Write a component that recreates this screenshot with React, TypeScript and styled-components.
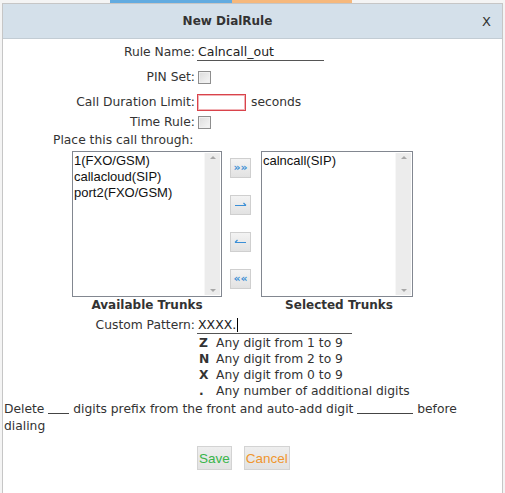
import React from 'react';
import styled, { createGlobalStyle } from 'styled-components';

const GlobalStyle = createGlobalStyle`
  html, body {
    margin: 0;
    padding: 0;
    background: #ffffff;
  }
  body {
    font-family: "DejaVu Sans", Verdana, sans-serif;
    font-size: 12.3px;
    color: #333333;
  }
`;

const Page = styled.div`
  width: 505px;
  height: 493px;
  overflow: hidden;
  position: relative;
  background: #f4f4f4;
`;

const TabStrip = styled.div`
  display: flex;
  height: 3px;
  padding-left: 110px;
  background: #f4f4f4;
`;

const TabBar = styled.div<{ $color: string; $w: number }>`
  width: ${(p) => p.$w}px;
  background: ${(p) => p.$color};
`;

const Dialog = styled.div`
  margin: 0 2px;
  border: 1px solid #c6c6c6;
  border-bottom: none;
  background: #ffffff;
  height: 490px;
`;

const Header = styled.div`
  height: 34px;
  background: #d4e0ea;
  border-bottom: 1px solid #c2ccd4;
  display: flex;
  align-items: center;
  justify-content: center;
  position: relative;
`;

const Title = styled.div`
  font-weight: bold;
  font-size: 12px;
  color: #333;
  margin-left: -50px;
`;

const Close = styled.div`
  position: absolute;
  right: 11px;
  top: 10px;
  font-size: 13px;
  color: #333;
`;

const Body = styled.div`
  padding-top: 4px;
  display: flex;
  flex-direction: column;
`;

const Row = styled.div<{ $h: number; $mt?: number }>`
  display: flex;
  align-items: center;
  height: ${(p) => p.$h}px;
  margin-top: ${(p) => p.$mt ?? 0}px;
`;

const Label = styled.div`
  width: 192px;
  text-align: right;
  padding-right: 2px;
  white-space: nowrap;
`;

const LineInput = styled.div<{ $w: number }>`
  width: ${(p) => p.$w}px;
  height: 17px;
  border-bottom: 1px solid #555;
  font-size: 12.5px;
  line-height: 17px;
  padding-left: 1px;
  color: #222;
  display: flex;
  align-items: center;
`;

const Caret = styled.span`
  display: inline-block;
  width: 1px;
  height: 14px;
  background: #000;
  margin-left: 1px;
`;

const Check = styled.div`
  width: 11px;
  height: 11px;
  border: 1px solid #8e8e8e;
  background: linear-gradient(135deg, #dcdcdc, #f6f6f6);
  box-shadow: inset 0 0 0 1px #f0f0f0;
  margin-left: 1px;
`;

const BoxInput = styled.div`
  width: 47px;
  height: 15px;
  border: 1px solid #d9434b;
  box-shadow: inset 0 0 0 1px #f1b3b6;
`;

const Suffix = styled.span`
  margin-left: 5px;
`;

const Plain = styled.div<{ $pl: number }>`
  padding-left: ${(p) => p.$pl}px;
`;

const TrunkArea = styled.div`
  display: flex;
  margin-top: 3px;
  padding-left: 69px;
  height: 146px;
`;

const ListBox = styled.div<{ $w: number }>`
  width: ${(p) => p.$w}px;
  height: 146px;
  box-sizing: border-box;
  border: 1px solid #828790;
  display: flex;
  background: #fff;
`;

const Items = styled.div`
  flex: 1;
  padding: 1px 0 0 1px;
  font-family: "Liberation Sans", Arial, sans-serif;
  font-size: 13px;
  line-height: 16px;
  color: #111;
`;

const ScrollBar = styled.div`
  width: 15px;
  margin: 1px 1px 1px 0;
  background: #ececec;
  border-left: 1px solid #f7f7f7;
  display: flex;
  flex-direction: column;
  justify-content: space-between;
  align-items: center;
  padding: 3px 0;
`;

const ArrowGlyph = styled.div<{ $down?: boolean }>`
  width: 0;
  height: 0;
  border-left: 3px solid transparent;
  border-right: 3px solid transparent;
  ${(p) =>
    p.$down
      ? 'border-top: 3px solid #a8a8a8;'
      : 'border-bottom: 3px solid #a8a8a8;'}
`;

const MoveColumn = styled.div`
  width: 41px;
  display: flex;
  flex-direction: column;
  align-items: center;
  padding-top: 7px;
  gap: 17px;
  margin-left: -2px;
`;

const MoveButton = styled.div`
  width: 21px;
  height: 20px;
  box-sizing: border-box;
  border: 1px solid #cfcfcf;
  background: linear-gradient(#f3f3f3, #e2e2e2);
  display: flex;
  align-items: center;
  justify-content: center;
  color: #3b8fd6;
  font-size: 11px;
  font-weight: bold;
  letter-spacing: 0;
  padding-bottom: 1px;
`;

const Captions = styled.div`
  display: flex;
  padding-left: 69px;
  height: 16px;
  align-items: center;
  font-weight: bold;
  font-size: 12px;
`;

const Caption = styled.div<{ $w: number }>`
  width: ${(p) => p.$w}px;
  text-align: center;
`;

const Legend = styled.div`
  display: flex;
  flex-direction: column;
  padding-left: 196px;
  margin-top: 1px;
`;

const LegendRow = styled.div`
  display: flex;
  height: 16px;
  align-items: center;
`;

const Key = styled.span`
  width: 17px;
  font-weight: bold;
`;

const Sentence = styled.div`
  margin-top: 2px;
  padding-left: 1px;
  line-height: 17px;
`;

const Blank = styled.span<{ $w: number }>`
  display: inline-block;
  width: ${(p) => p.$w}px;
  border-bottom: 1px solid #444;
  height: 12px;
  vertical-align: -1px;
`;

const Actions = styled.div`
  display: flex;
  gap: 12px;
  padding-left: 194px;
  margin-top: 11px;
`;

const ActionButton = styled.div<{ $color: string }>`
  height: 24px;
  box-sizing: border-box;
  padding: 0 1px;
  border: 1px solid #d3d3d3;
  background: linear-gradient(#eeeeee, #e2e2e2);
  color: ${(p) => p.$color};
  font-family: "Liberation Sans", Arial, sans-serif;
  font-size: 13.5px;
  display: flex;
  align-items: center;
`;

function LineArrow({ left }: { left?: boolean }) {
  return (
    <svg width="13" height="6" viewBox="0 0 13 6">
      {left ? (
        <path d="M1 3.5 H12 M1 3.5 L3.5 1" stroke="#3b8fd6" strokeWidth="1.2" fill="none" />
      ) : (
        <path d="M1 3.5 H12 M12 3.5 L9.5 1" stroke="#3b8fd6" strokeWidth="1.2" fill="none" />
      )}
    </svg>
  );
}

function TrunkList({ width, items }: { width: number; items: string[] }) {
  return (
    <ListBox $w={width}>
      <Items>
        {items.map((i) => (
          <div key={i}>{i}</div>
        ))}
      </Items>
      <ScrollBar>
        <ArrowGlyph />
        <ArrowGlyph $down />
      </ScrollBar>
    </ListBox>
  );
}

export default function App() {
  return (
    <Page>
      <GlobalStyle />
      <TabStrip>
        <TabBar $color="#62abe0" $w={122} />
        <TabBar $color="#f6b87c" $w={120} />
      </TabStrip>
      <Dialog>
        <Header>
          <Title>New DialRule</Title>
          <Close>X</Close>
        </Header>
        <Body>
          <Row $h={18}>
            <Label>Rule Name:</Label>
            <LineInput $w={126}>Calncall_out</LineInput>
          </Row>
          <Row $h={16} $mt={8}>
            <Label>PIN Set:</Label>
            <Check />
          </Row>
          <Row $h={18} $mt={8}>
            <Label>Call Duration Limit:</Label>
            <BoxInput />
            <Suffix>seconds</Suffix>
          </Row>
          <Row $h={16} $mt={3}>
            <Label>Time Rule:</Label>
            <Check />
          </Row>
          <Row $h={16} $mt={2}>
            <Plain $pl={50}>Place this call through:</Plain>
          </Row>
          <TrunkArea>
            <TrunkList width={150} items={['1(FXO/GSM)', 'callacloud(SIP)', 'port2(FXO/GSM)']} />
            <MoveColumn>
              <MoveButton>»»</MoveButton>
              <MoveButton>
                <LineArrow />
              </MoveButton>
              <MoveButton>
                <LineArrow left />
              </MoveButton>
              <MoveButton>««</MoveButton>
            </MoveColumn>
            <TrunkList width={152} items={['calncall(SIP)']} />
          </TrunkArea>
          <Captions>
            <Caption $w={150}>Available Trunks</Caption>
            <Caption $w={41} />
            <Caption $w={152}>Selected Trunks</Caption>
          </Captions>
          <Row $h={18} $mt={3}>
            <Label>Custom Pattern:</Label>
            <LineInput $w={154}>
              XXXX.
              <Caret />
            </LineInput>
          </Row>
          <Legend>
            <LegendRow>
              <Key>Z</Key>Any digit from 1 to 9
            </LegendRow>
            <LegendRow>
              <Key>N</Key>Any digit from 2 to 9
            </LegendRow>
            <LegendRow>
              <Key>X</Key>Any digit from 0 to 9
            </LegendRow>
            <LegendRow>
              <Key>.</Key>Any number of additional digits
            </LegendRow>
          </Legend>
          <Sentence>
            Delete <Blank $w={21} /> digits prefix from the front and auto-add digit <Blank $w={56} /> before
            <br />
            dialing
          </Sentence>
          <Actions>
            <ActionButton $color="#39b54a">Save</ActionButton>
            <ActionButton $color="#f0962e">Cancel</ActionButton>
          </Actions>
        </Body>
      </Dialog>
    </Page>
  );
}
